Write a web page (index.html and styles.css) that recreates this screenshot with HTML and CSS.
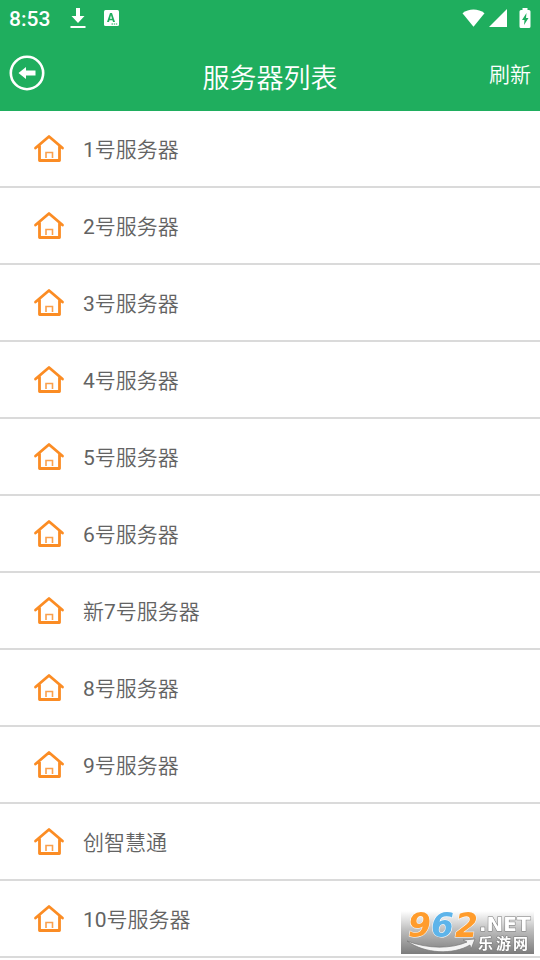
FILE: index.html
```html
<!DOCTYPE html>
<html lang="zh-CN">
<head>
<meta charset="utf-8">
<meta name="viewport" content="width=device-width, initial-scale=1">
<title>服务器列表</title>
<link rel="stylesheet" href="styles.css">
</head>
<body>
<svg class="defs" aria-hidden="true">
  <symbol id="home" viewBox="0 0 32 31">
    <path d="M2.500 15 16 3.500 29.500 15M6.500 13V27.500h20V13" fill="none" stroke="#fb8c24" stroke-width="2.800" stroke-linecap="round" stroke-linejoin="round"/>
    <path d="M13 25v-5.500h6.500V25" fill="none" stroke="#fba04c" stroke-width="1.600"/>
  </symbol>
</svg>
<header class="top">
  <div class="status">
    <div class="status-group">
      <span class="clock">8:53</span>
      <svg class="download" viewBox="0 0 16 22" aria-hidden="true"><path d="M6 1h4v8h4.500L8 16 1.500 9H6zM.5 19h15v2H.5z"/></svg>
      <svg class="keyboard" viewBox="0 0 16 16" aria-hidden="true"><rect x="1" y="0" width="15" height="16" rx="1.500"/><path class="cut" fill-rule="evenodd" d="M7 3h2l3 9h-2l-.5-1.800h-3L6 12H4zm1 2.200L7 8.700h2zM8.500 13.500H10v1H8.500zM10.800 13.500h1.400v1h-1.400zM13 13.500h1.200v1H13z"/></svg>
    </div>
    <div class="status-group signals">
      <svg class="wifi" viewBox="0 0 24 18" aria-hidden="true"><path d="M12 18 .5 4C7-1 17-1 23.500 4z"/></svg>
      <svg class="cell" viewBox="0 0 18 18" aria-hidden="true"><path d="M18 0v18H0z"/></svg>
      <svg class="battery" viewBox="0 0 12 20" aria-hidden="true"><path d="M3.500 0h5v2H10q1.500 0 1.500 1.500v15Q11.500 20 10 20H2Q.5 20 .5 18.500v-15Q.5 2 2 2h1.500z"/><path class="cut" d="M7.500 5 3 12h2.500L5 17l4.500-7H7z"/></svg>
    </div>
  </div>
  <div class="bar">
    <button class="back" type="button" aria-label="返回">
      <svg viewBox="0 0 36 36" aria-hidden="true"><circle cx="18" cy="18" r="16.200" fill="none" stroke="#fff" stroke-width="2.600"/><path d="M9.500 18 17 12v3.500h9.500v5H17V24z" fill="#fff"/></svg>
    </button>
    <h1>服务器列表</h1>
    <button class="refresh" type="button">刷新</button>
  </div>
</header>
<main>
  <ul class="servers">
    <li><a href="#s1"><svg class="home"><use href="#home"/></svg><span><b>1</b>号服务器</span></a></li>
    <li><a href="#s2"><svg class="home"><use href="#home"/></svg><span><b>2</b>号服务器</span></a></li>
    <li><a href="#s3"><svg class="home"><use href="#home"/></svg><span><b>3</b>号服务器</span></a></li>
    <li><a href="#s4"><svg class="home"><use href="#home"/></svg><span><b>4</b>号服务器</span></a></li>
    <li><a href="#s5"><svg class="home"><use href="#home"/></svg><span><b>5</b>号服务器</span></a></li>
    <li><a href="#s6"><svg class="home"><use href="#home"/></svg><span><b>6</b>号服务器</span></a></li>
    <li><a href="#s7"><svg class="home"><use href="#home"/></svg><span>新<b>7</b>号服务器</span></a></li>
    <li><a href="#s8"><svg class="home"><use href="#home"/></svg><span><b>8</b>号服务器</span></a></li>
    <li><a href="#s9"><svg class="home"><use href="#home"/></svg><span><b>9</b>号服务器</span></a></li>
    <li><a href="#s10"><svg class="home"><use href="#home"/></svg><span>创智慧通</span></a></li>
    <li><a href="#s11"><svg class="home"><use href="#home"/></svg><span><b>10</b>号服务器</span></a></li>
  </ul>
</main>
<svg class="watermark" viewBox="0 0 133 43" role="img" aria-label="962.NET 乐游网">
  <defs>
    <linearGradient id="shade" x1="0" y1="0" x2="0" y2="1"><stop offset="0" stop-color="#fff"/><stop offset=".45" stop-color="#bdbdbd"/><stop offset="1" stop-color="#7c7c7c"/></linearGradient>
  </defs>
  <rect width="133" height="43" fill="url(#shade)"/>
  <path d="M6 30C24 43 52 44 69 34l1 4 4-10-12 1 4 2C50 38 27 38 6 30z" fill="#f4f4f4" stroke="#777" stroke-width=".7"/>
  <g class="digits">
    <text x="7" y="26" fill="#ff9c2c">9</text>
    <text x="30" y="26" fill="#5db4ea">6</text>
    <text x="54" y="26" fill="#ff9c2c">2</text>
  </g>
  <text class="net" x="78" y="20">.NET</text>
  <text class="site" x="77" y="38">乐</text>
  <text class="site" x="95" y="38">游</text>
  <text class="site" x="112" y="38">网</text>
</svg>
</body>
</html>
```
FILE: styles.css
```css
* { box-sizing: border-box; }

body {
  margin: 0;
  background: #fff;
  color: #636363;
  font-family: Roboto, "Noto Sans CJK SC", sans-serif;
  font-size: 21px;
  font-weight: 350;
}

.defs { position: absolute; width: 0; height: 0; }

.top {
  background: #1fae5e;
  color: #fff;
}

.status {
  display: flex;
  justify-content: space-between;
  align-items: center;
  height: 36px;
  padding: 0 9px;
}

.status svg { fill: #fff; }
.status svg .cut { fill: #1fae5e; }

.status-group {
  display: flex;
  align-items: center;
}

.clock {
  padding-top: 2px;
  font-size: 21px;
  font-weight: 500;
  line-height: 24px;
}

.download { width: 16px; height: 22px; margin-left: 20px; }
.keyboard { width: 16px; height: 16px; margin-left: 17px; }

.signals { gap: 4px; }
.wifi { width: 23px; height: 18px; }
.cell { width: 18px; height: 18px; }
.battery { width: 12px; height: 20px; margin-left: 8px; }

.bar {
  display: grid;
  grid-template-columns: 1fr auto 1fr;
  align-items: center;
  height: 75px;
  padding: 0 9px 1px;
}

button {
  padding: 0;
  border: 0;
  background: none;
  color: inherit;
  font: inherit;
  cursor: pointer;
}

.back {
  justify-self: start;
  width: 36px;
  height: 36px;
}

.back svg { display: block; width: 36px; height: 36px; }

.refresh { justify-self: end; }

h1 {
  margin: 12px 0 0;
  font-size: 27px;
  font-weight: 350;
  line-height: 40px;
}

.servers {
  margin: 0;
  padding: 0;
  list-style: none;
}

.servers li { border-bottom: 2px solid #dadada; }

.servers a {
  display: flex;
  align-items: center;
  gap: 18px;
  height: 75px;
  padding: 0 33px;
  color: inherit;
  text-decoration: none;
}

.servers span {
  padding-top: 2px;
  line-height: 32px;
}

.servers b { font-weight: 400; }

.home { width: 32px; height: 31px; }

.watermark {
  position: fixed;
  right: 6px;
  bottom: 6px;
  width: 133px;
  height: 43px;
  overflow: visible;
}

.digits {
  font: italic 700 33px "DejaVu Sans", sans-serif;
  stroke: #fff;
  stroke-width: 1px;
  paint-order: stroke;
}

.net, .site {
  fill: #fff;
  stroke: #777;
  stroke-width: 1px;
  paint-order: stroke;
}

.net { font: 700 20px "DejaVu Sans", sans-serif; }
.site { font: 700 15px "Noto Sans CJK SC", sans-serif; }
```
